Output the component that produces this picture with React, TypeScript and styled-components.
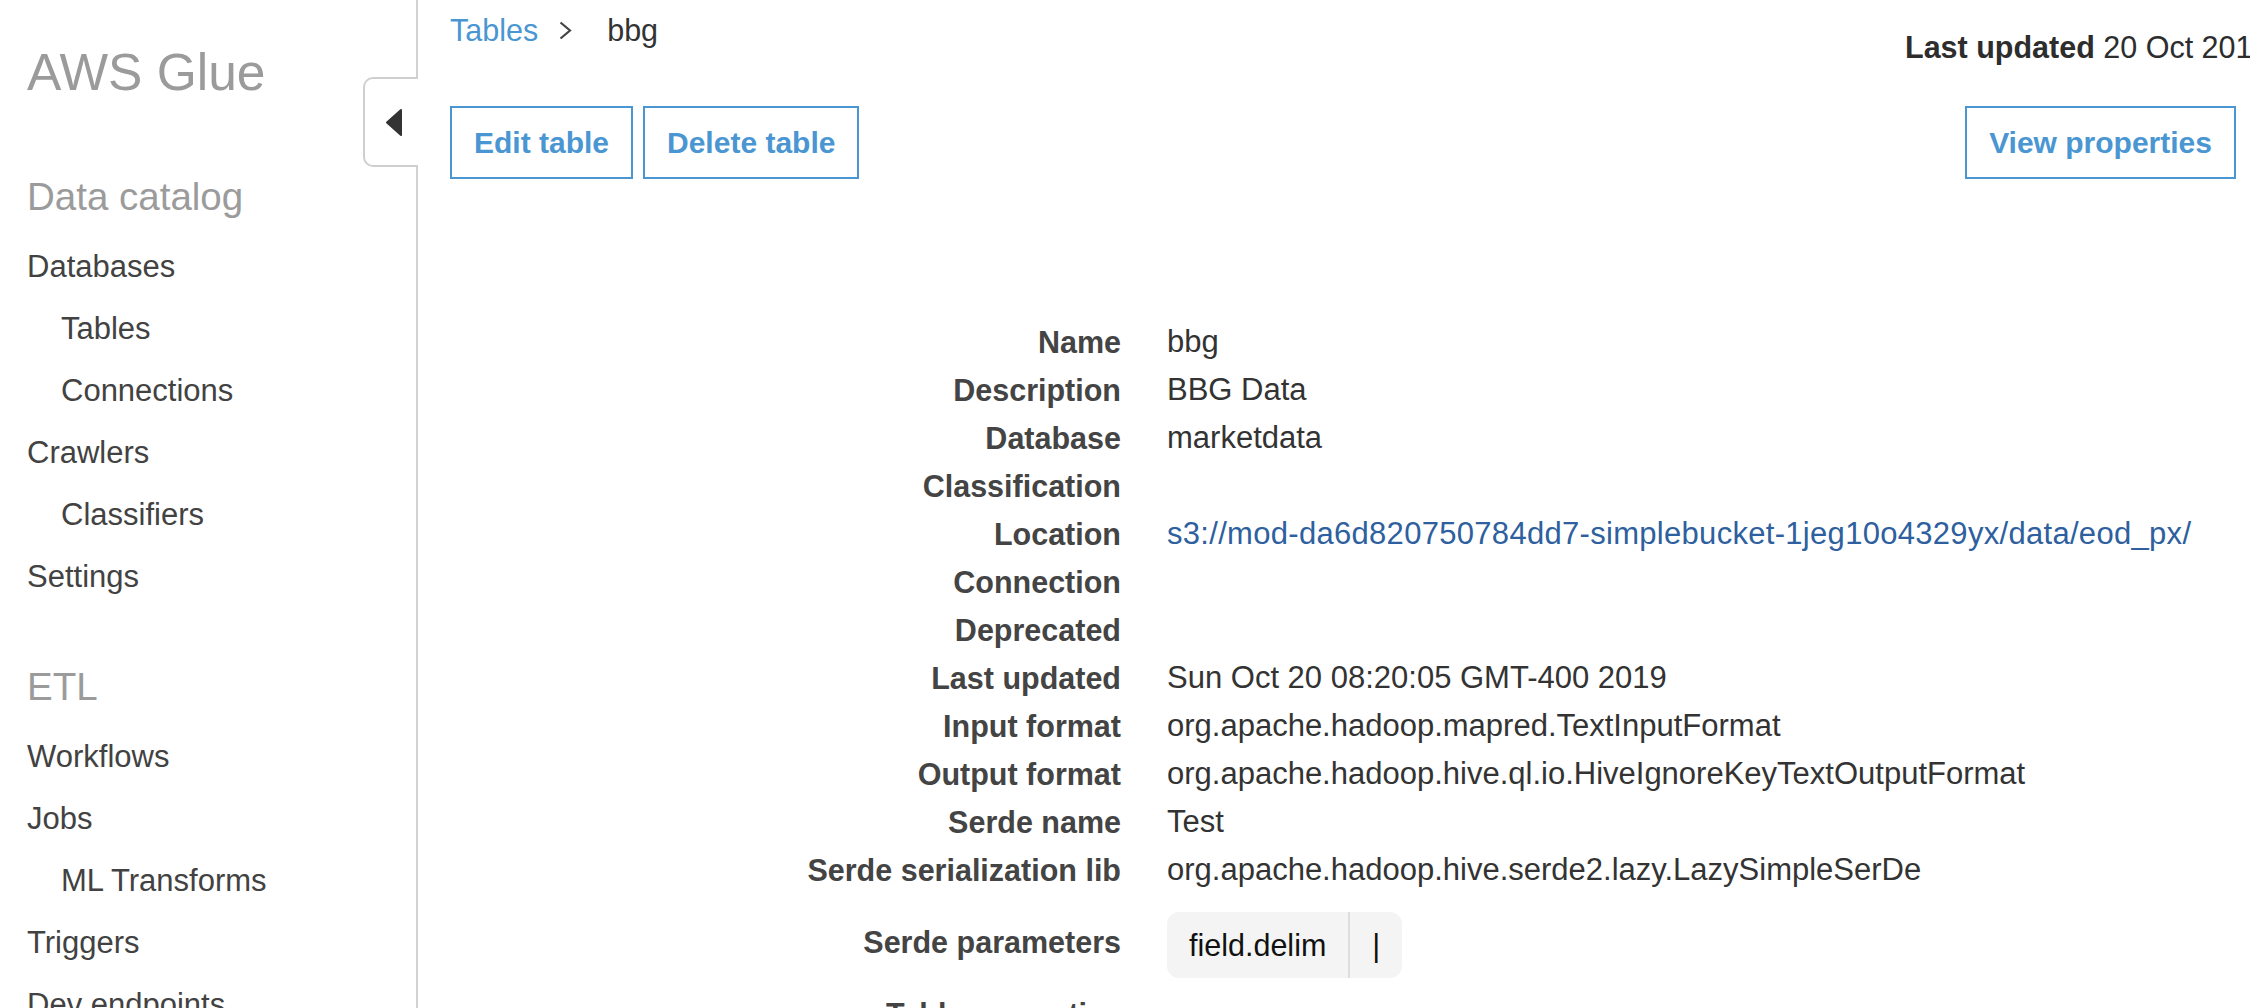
import React from "react";
import styled, { createGlobalStyle } from "styled-components";

const GlobalStyle = createGlobalStyle`
  html, body {
    margin: 0;
    padding: 0;
    background: #ffffff;
    overflow: hidden;
  }
  body {
    font-family: "Liberation Sans", Arial, Helvetica, sans-serif;
    color: #333333;
  }
  * { box-sizing: border-box; }
`;

const Page = styled.div`
  display: flex;
  width: 2250px;
  height: 1008px;
  overflow: hidden;
`;

const Sidebar = styled.nav`
  position: relative;
  flex: 0 0 418px;
  width: 418px;
  border-right: 2px solid #d2d2d2;
  padding: 41px 0 0 27px;
  display: flex;
  flex-direction: column;
`;

const Brand = styled.h1`
  margin: 0;
  font-size: 51.5px;
  line-height: 62px;
  font-weight: 400;
  color: #9b9b9b;
  white-space: nowrap;
`;

const SectionHeading = styled.h2<{ $gap: number }>`
  margin: ${(p) => p.$gap}px 0 16px 0;
  font-size: 38.5px;
  line-height: 46px;
  font-weight: 400;
  color: #9b9b9b;
`;

const NavItem = styled.a<{ $sub?: boolean }>`
  display: block;
  font-size: 31px;
  line-height: 62px;
  color: #424242;
  text-decoration: none;
  padding-left: ${(p) => (p.$sub ? 34 : 0)}px;
  white-space: nowrap;
`;

const CollapseTab = styled.button`
  position: absolute;
  top: 77px;
  right: -2px;
  width: 55px;
  height: 90px;
  background: #ffffff;
  border: 2px solid #cfcfcf;
  border-right: none;
  border-radius: 10px 0 0 10px;
  padding: 0 0 0 4px;
  display: flex;
  align-items: center;
  justify-content: center;
  cursor: pointer;
`;

const Main = styled.main`
  flex: 1;
  min-width: 0;
  padding: 6px 14px 0 32px;
  display: flex;
  flex-direction: column;
`;

const Header = styled.div`
  display: flex;
  align-items: flex-start;
  justify-content: space-between;
  height: 48px;
`;

const Breadcrumb = styled.div`
  display: flex;
  align-items: center;
  height: 48px;
  font-size: 30.5px;
  line-height: 48px;
`;

const CrumbLink = styled.a`
  color: #4a96d2;
  text-decoration: none;
`;

const CrumbSep = styled.span`
  display: inline-flex;
  margin: 0 35px 0 21px;
`;

const CrumbCurrent = styled.span`
  color: #333333;
`;

const Updated = styled.div`
  width: 331px;
  padding-top: 17px;
  font-size: 30.5px;
  line-height: 48px;
  color: #2d2d2d;
  white-space: nowrap;
`;

const Toolbar = styled.div`
  display: flex;
  align-items: center;
  gap: 10px;
  margin-top: 52px;
`;

const Spacer = styled.div`
  flex: 1;
`;

const OutlineButton = styled.button`
  height: 73px;
  padding: 0 22px;
  border: 2px solid #4a96d2;
  border-radius: 0;
  background: #ffffff;
  color: #4a96d2;
  font-family: "Liberation Sans", Arial, Helvetica, sans-serif;
  font-size: 30px;
  font-weight: 700;
  line-height: 69px;
  white-space: nowrap;
  cursor: pointer;
`;

const Details = styled.dl`
  display: grid;
  grid-template-columns: 671px 1fr;
  column-gap: 46px;
  align-items: center;
  margin: 139px 0 0 0;
  font-size: 30.5px;
  line-height: 48px;
`;

const Label = styled.dt`
  margin: 0;
  text-align: right;
  font-weight: 700;
  color: #444444;
  white-space: nowrap;
`;

const Value = styled.dd<{ $pad?: boolean }>`
  margin: 0;
  min-height: 48px;
  font-size: 31px;
  color: #333333;
  white-space: nowrap;
  padding: ${(p) => (p.$pad ? "18px 0 12px 0" : "0")};
`;

const ValueLink = styled.a`
  color: #2e5f9e;
  text-decoration: none;
  letter-spacing: 0.3px;
`;

const ParamPill = styled.div`
  display: inline-flex;
  align-items: stretch;
  height: 66px;
  background: #f4f4f4;
  border-radius: 12px;
  color: #111111;
  font-size: 30.5px;
`;

const ParamCell = styled.span<{ $divider?: boolean }>`
  display: flex;
  align-items: center;
  padding: 0 22px;
  border-left: ${(p) => (p.$divider ? "2px solid #dedede" : "none")};
`;

const rows: Array<[string, React.ReactNode]> = [
  ["Name", "bbg"],
  ["Description", "BBG Data"],
  ["Database", "marketdata"],
  ["Classification", ""],
  [
    "Location",
    <ValueLink href="#">
      s3://mod-da6d820750784dd7-simplebucket-1jeg10o4329yx/data/eod_px/
    </ValueLink>,
  ],
  ["Connection", ""],
  ["Deprecated", ""],
  ["Last updated", "Sun Oct 20 08:20:05 GMT-400 2019"],
  ["Input format", "org.apache.hadoop.mapred.TextInputFormat"],
  ["Output format", "org.apache.hadoop.hive.ql.io.HiveIgnoreKeyTextOutputFormat"],
  ["Serde name", "Test"],
  ["Serde serialization lib", "org.apache.hadoop.hive.serde2.lazy.LazySimpleSerDe"],
];

export default function App() {
  return (
    <>
      <GlobalStyle />
      <Page>
        <Sidebar>
          <Brand>AWS Glue</Brand>
          <CollapseTab aria-label="Collapse navigation">
            <svg width="18" height="29" viewBox="0 0 18 29">
              <polygon
                points="16,2 2,14.5 16,27"
                fill="#333333"
                stroke="#333333"
                strokeWidth="2"
                strokeLinejoin="round"
              />
            </svg>
          </CollapseTab>
          <SectionHeading $gap={71}>Data catalog</SectionHeading>
          <NavItem href="#">Databases</NavItem>
          <NavItem href="#" $sub>Tables</NavItem>
          <NavItem href="#" $sub>Connections</NavItem>
          <NavItem href="#">Crawlers</NavItem>
          <NavItem href="#" $sub>Classifiers</NavItem>
          <NavItem href="#">Settings</NavItem>
          <SectionHeading $gap={56}>ETL</SectionHeading>
          <NavItem href="#">Workflows</NavItem>
          <NavItem href="#">Jobs</NavItem>
          <NavItem href="#" $sub>ML Transforms</NavItem>
          <NavItem href="#">Triggers</NavItem>
          <NavItem href="#">Dev endpoints</NavItem>
        </Sidebar>
        <Main>
          <Header>
            <Breadcrumb>
              <CrumbLink href="#">Tables</CrumbLink>
              <CrumbSep>
                <svg width="13" height="19" viewBox="0 0 13 19">
                  <polyline
                    points="1.5,1.5 11,9.5 1.5,17.5"
                    fill="none"
                    stroke="#444444"
                    strokeWidth="2.2"
                  />
                </svg>
              </CrumbSep>
              <CrumbCurrent>bbg</CrumbCurrent>
            </Breadcrumb>
            <Updated>
              <b>Last updated</b> 20 Oct 2019
            </Updated>
          </Header>
          <Toolbar>
            <OutlineButton>Edit table</OutlineButton>
            <OutlineButton>Delete table</OutlineButton>
            <Spacer />
            <OutlineButton>View properties</OutlineButton>
          </Toolbar>
          <Details>
            {rows.map(([label, value]) => (
              <React.Fragment key={label}>
                <Label>{label}</Label>
                <Value>{value}</Value>
              </React.Fragment>
            ))}
            <Label>Serde parameters</Label>
            <Value $pad>
              <ParamPill>
                <ParamCell>field.delim</ParamCell>
                <ParamCell $divider>|</ParamCell>
              </ParamPill>
            </Value>
            <Label>Table properties</Label>
            <Value />
          </Details>
        </Main>
      </Page>
    </>
  );
}
